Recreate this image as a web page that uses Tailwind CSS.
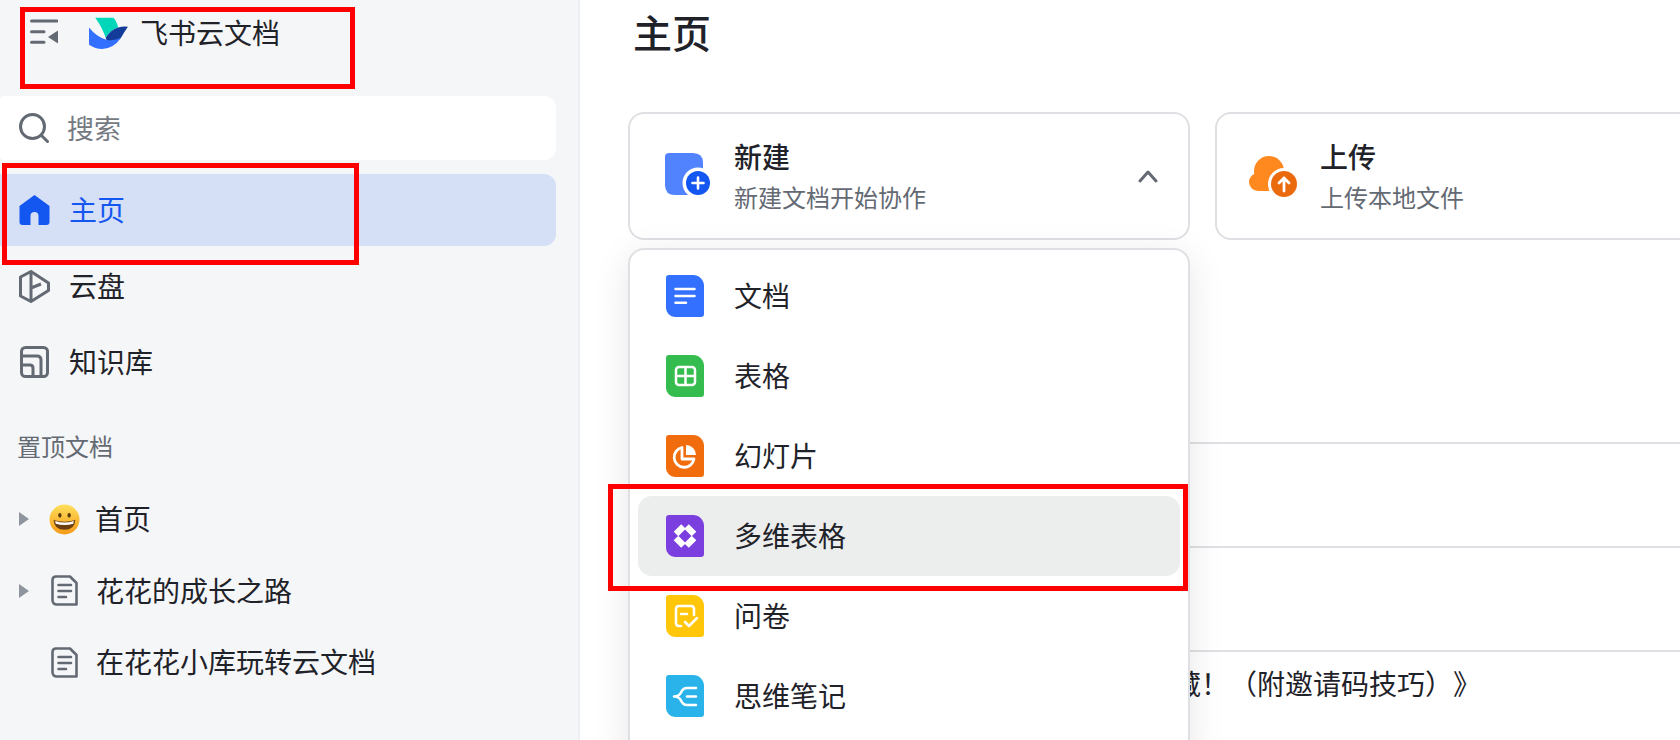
<!DOCTYPE html>
<html lang="zh-CN">
<head>
<meta charset="utf-8" />
<title>飞书云文档</title>
<script src="https://cdn.jsdelivr.net/npm/@tailwindcss/browser@4"></script>
</head>
<body class="bg-white">
<div class="relative flex w-[1680px] h-[740px] overflow-hidden font-['Noto_Sans_CJK_SC',sans-serif] text-[#1f2329] [text-spacing-trim:space-all]">

  <!-- sidebar -->
  <aside class="w-[580px] shrink-0 h-full bg-[#f5f6f8] border-r-2 border-[#eceef1]">
    <div class="h-[96px] flex items-start pt-[16px] pl-[30px]">
      <svg class="w-[28px] h-[26px] mt-[3px]" viewBox="0 0 28 26" fill="none" stroke="#646a73" stroke-width="3" stroke-linecap="round">
        <path d="M1.5 2H27M1.5 12.7H14M1.5 23.3H14" />
        <path d="M18 18L28 11.5V24.5Z" fill="#646a73" stroke="none" />
      </svg>
      <svg class="w-[40px] h-[33px] ml-[31px] mt-[1px]" viewBox="210 20 115 95">
        <path d="M228 22H280Q288 28 294 50Q272 56 258 80Q248 50 228 22Z" fill="#00d6b9" />
        <path d="M258 80Q272 56 294 50Q308 46 322 48Q312 62 302 80Q290 96 262 92Z" fill="#133c9a" />
        <path d="M210 50Q232 78 262 86Q282 90 302 80Q280 112 248 112Q228 112 210 100Z" fill="#3370ff" />
      </svg>
      <span class="ml-[11px] text-[28px] leading-[32px]">飞书云文档</span>
    </div>

    <div class="w-[556px] h-[64px] bg-white rounded-r-[12px] rounded-l-[4px] flex items-center pl-[19px]">
      <svg class="w-[30px] h-[30px]" viewBox="0 0 30 30" fill="none" stroke="#646a73" stroke-width="3" stroke-linecap="round">
        <circle cx="13.5" cy="13.5" r="12" /><path d="M23 23L28.5 28.5" />
      </svg>
      <span class="ml-[18px] text-[27px] text-[#757a82]">搜索</span>
    </div>

    <nav class="mt-[14px] w-[556px] flex flex-col gap-[4px] text-[28px]">
      <a class="h-[72px] flex items-center pl-[19px] bg-[#d5dff6] rounded-r-[12px] text-[#1456f0]">
        <svg class="w-[31px] h-[30px]" viewBox="0 0 30 30" fill="#1456f0">
          <path d="M15 0L30 11V27Q30 30 27 30H19V21a4 4 0 0 0-8 0V30H3Q0 30 0 27V11Z" />
        </svg>
        <span class="ml-[19px] -mt-[2px]">主页</span>
      </a>
      <a class="h-[72px] flex items-center pl-[19px]">
        <svg class="w-[31px] h-[33px]" viewBox="0 0 31 33" fill="none" stroke="#646a73" stroke-width="3" stroke-linejoin="round">
          <path d="M12 1.5L29.5 13V20.5L12 31.5L1.5 26V7Z" /><path d="M12 1.5V31.5M12 18L22 14" />
        </svg>
        <span class="ml-[19px] -mt-[2px]">云盘</span>
      </a>
      <a class="h-[72px] flex items-center pl-[20px]">
        <svg class="w-[29px] h-[32px]" viewBox="0 0 29 32" fill="none" stroke="#646a73" stroke-width="3" stroke-linejoin="round">
          <rect x="1.5" y="1.5" width="26" height="29" rx="4" /><path d="M1.5 10H17Q21 10 21 14V30.5M1.5 19H10Q13 19 13 22V30.5" />
        </svg>
        <span class="ml-[20px] -mt-[2px]">知识库</span>
      </a>
    </nav>

    <div class="mt-[30px] pl-[17px] h-[36px] flex items-center text-[24px] text-[#646a73]">置顶文档</div>

    <ul class="mt-[19px] text-[28px]">
      <li class="h-[72px] flex items-center pl-[19px]">
        <span class="w-0 h-0 border-y-[7px] border-y-transparent border-l-[10px] border-l-[#8f959e]"></span>
        <svg class="ml-[20px] w-[31px] h-[31px]" viewBox="0 0 30 30">
          <defs><linearGradient id="face" x1="0" y1="0" x2="0" y2="1"><stop offset="0" stop-color="#ffdf5c" /><stop offset="1" stop-color="#f59a16" /></linearGradient></defs>
          <circle cx="15" cy="15" r="14.5" fill="url(#face)" />
          <ellipse cx="10.5" cy="11" rx="1.6" ry="2.2" fill="#5a3a10" /><ellipse cx="19.5" cy="11" rx="1.6" ry="2.2" fill="#5a3a10" />
          <path d="M4.5 15.5Q15 19 25.5 15.5Q25 25 15 25Q5 25 4.5 15.5Z" fill="#6b3f10" />
          <path d="M6 16.5Q15 19.5 24 16.5L23.5 19Q15 21.5 6.5 19Z" fill="#fff" />
        </svg>
        <span class="ml-[15px] -mt-[2px]">首页</span>
      </li>
      <li class="h-[71px] flex items-center pl-[19px]">
        <span class="w-0 h-0 border-y-[7px] border-y-transparent border-l-[10px] border-l-[#8f959e]"></span>
        <svg class="ml-[22px] w-[27px] h-[31px]" viewBox="0 0 27 31" fill="none" stroke="#646a73" stroke-width="2.6" stroke-linejoin="round" stroke-linecap="round">
          <path d="M5 1.5H19L25.5 8V29.5H6Q1.5 29.5 1.5 25V5Q1.5 1.5 5 1.5Z" /><path d="M7.5 10H20M7.5 16H20M7.5 22H15" />
        </svg>
        <span class="ml-[18px] -mt-[2px]">花花的成长之路</span>
      </li>
      <li class="h-[72px] flex items-center pl-[51px]">
        <svg class="w-[27px] h-[31px]" viewBox="0 0 27 31" fill="none" stroke="#646a73" stroke-width="2.6" stroke-linejoin="round" stroke-linecap="round">
          <path d="M5 1.5H19L25.5 8V29.5H6Q1.5 29.5 1.5 25V5Q1.5 1.5 5 1.5Z" /><path d="M7.5 10H20M7.5 16H20M7.5 22H15" />
        </svg>
        <span class="ml-[18px] -mt-[2px]">在花花小库玩转云文档</span>
      </li>
    </ul>
  </aside>

  <!-- main -->
  <main class="relative flex-1 pl-[48px] h-full">
    <h1 class="pl-[5px] h-[62px] flex items-center text-[39px] font-medium">主页</h1>

    <div class="mt-[50px] flex gap-[25px]">
      <div class="w-[562px] shrink-0 h-[128px] border-2 border-[#dee0e3] rounded-[16px] flex items-center pl-[35px] pr-[30px]">
        <svg class="w-[46px] h-[44px] -mt-[2px]" viewBox="0 0 46 44">
          <path d="M4 0H28Q38 0 38 10V42H10Q0 42 0 32V4Q0 0 4 0Z" fill="#5283ff" />
          <circle cx="33" cy="30" r="15.5" fill="#fff" /><circle cx="33" cy="30" r="12" fill="#1456f0" />
          <path d="M33 24.5V35.5M27.5 30H38.5" stroke="#fff" stroke-width="2.6" stroke-linecap="round" />
        </svg>
        <div class="ml-[23px]">
          <div class="text-[28px] leading-[38px] font-medium">新建</div>
          <div class="text-[24px] leading-[38px] text-[#646a73] mt-[3px]">新建文档开始协作</div>
        </div>
        <svg class="ml-auto w-[20px] h-[14px]" viewBox="0 0 20 14" fill="none" stroke="#646a73" stroke-width="3" stroke-linecap="round" stroke-linejoin="round">
          <path d="M2 12L10 3L18 12" />
        </svg>
      </div>
      <div class="w-[562px] shrink-0 h-[128px] border-2 border-[#dee0e3] rounded-[16px] flex items-center pl-[32px]">
        <svg class="w-[49px] h-[41px]" viewBox="0 0 49 41">
          <g fill="#ff881f"><circle cx="20" cy="15" r="15" /><circle cx="9" cy="26" r="9" /><rect x="9" y="17" width="26" height="18" /></g>
          <circle cx="35" cy="28" r="16" fill="#fff" /><circle cx="35" cy="28" r="13" fill="#ea6a0e" />
          <path d="M35 35V22M30 27L35 22L40 27" fill="none" stroke="#fff" stroke-width="2.8" stroke-linecap="round" stroke-linejoin="round" />
        </svg>
        <div class="ml-[22px]">
          <div class="text-[28px] leading-[38px] font-medium">上传</div>
          <div class="text-[24px] leading-[38px] text-[#646a73] mt-[3px]">上传本地文件</div>
        </div>
      </div>
    </div>

    <!-- list behind the menu -->
    <div class="mt-[75px] w-[1052px] text-[28px]">
      <div class="h-[129px] border-b-2 border-[#dee0e3]"></div>
      <div class="h-[104px] border-b-2 border-[#dee0e3]"></div>
      <div class="h-[104px] border-b-2 border-[#dee0e3]"></div>
      <div class="pl-[545px] h-[62px] flex items-center whitespace-nowrap">藏！（附邀请码技巧）》</div>
    </div>

    <!-- new document menu -->
    <div class="absolute left-[48px] top-[248px] w-[562px] h-[520px] bg-white border-2 border-[#dee0e3] rounded-[16px] pt-[6px] px-[8px] shadow-[0_8px_36px_rgba(0,0,0,0.10)]">
      <div class="h-[80px] flex items-center pl-[28px] text-[28px]">
        <div class="w-[38px] h-[42px] bg-[#3370ff] rounded-tl-[3px] rounded-tr-[11px] rounded-bl-[9px] rounded-br-[3px]">
          <svg class="w-[38px] h-[42px]" viewBox="0 0 38 42" fill="none" stroke="#fff" stroke-width="2.5" stroke-linecap="round"><path d="M9.5 14H28.5M9.5 21H28.5M9.5 27.7H20" /></svg>
        </div>
        <span class="ml-[30px] -mt-[2px]">文档</span>
      </div>
      <div class="h-[80px] flex items-center pl-[28px] text-[28px]">
        <div class="w-[38px] h-[42px] bg-[#34bd4e] rounded-tl-[3px] rounded-tr-[11px] rounded-bl-[9px] rounded-br-[3px]">
          <svg class="w-[38px] h-[42px]" viewBox="0 0 38 42" fill="none" stroke="#fff" stroke-width="2.5"><rect x="10" y="12" width="19" height="18" rx="3" /><path d="M19.5 12V30M10 21H29" /></svg>
        </div>
        <span class="ml-[30px] -mt-[2px]">表格</span>
      </div>
      <div class="h-[80px] flex items-center pl-[28px] text-[28px]">
        <div class="w-[38px] h-[42px] bg-[#f06c0c] rounded-tl-[3px] rounded-tr-[11px] rounded-bl-[9px] rounded-br-[3px]">
          <svg class="w-[38px] h-[42px]" viewBox="0 0 38 42" fill="none" stroke="#fff" stroke-width="2.8"><path d="M16 12.5A10 10 0 1 0 28 24H16Z" stroke-linejoin="round" /><path d="M20 10A10 10 0 0 1 30 20H20Z" fill="#fff" stroke="none" /></svg>
        </div>
        <span class="ml-[30px] -mt-[2px]">幻灯片</span>
      </div>
      <div class="h-[80px] flex items-center pl-[28px] text-[28px] bg-[#eceeed] rounded-[14px]">
        <div class="w-[38px] h-[42px] bg-[#7b3fe0] rounded-tl-[3px] rounded-tr-[11px] rounded-bl-[9px] rounded-br-[3px]">
          <svg class="w-[38px] h-[42px]" viewBox="0 0 38 42" fill="none" stroke="#fff" stroke-width="6.5"><path d="M10 19L17.5 11.5M20.5 11.5L28 19M28 23L20.5 30.5M17.5 30.5L10 23" /></svg>
        </div>
        <span class="ml-[30px] -mt-[2px]">多维表格</span>
      </div>
      <div class="h-[80px] flex items-center pl-[28px] text-[28px]">
        <div class="w-[38px] h-[42px] bg-[#ffc60a] rounded-tl-[3px] rounded-tr-[11px] rounded-bl-[9px] rounded-br-[3px]">
          <svg class="w-[38px] h-[42px]" viewBox="0 0 38 42" fill="none" stroke="#fff" stroke-width="2.5" stroke-linecap="round" stroke-linejoin="round"><path d="M28 20V14Q28 11 25 11H13Q10 11 10 14V28Q10 31 13 31H15M15 19H21M19 27L23 31L31 23" /></svg>
        </div>
        <span class="ml-[30px] -mt-[2px]">问卷</span>
      </div>
      <div class="h-[80px] flex items-center pl-[28px] text-[28px]">
        <div class="w-[38px] h-[42px] bg-[#29b3ea] rounded-tl-[3px] rounded-tr-[11px] rounded-bl-[9px] rounded-br-[3px]">
          <svg class="w-[38px] h-[42px]" viewBox="0 0 38 42" fill="none" stroke="#fff" stroke-width="2.6" stroke-linecap="round" stroke-linejoin="round"><path d="M30 13H21Q17 13 15 17.5Q13 21.5 8 21.5Q13 21.5 15 25.5Q17 30 21 30H30M21 21.5H30" /></svg>
        </div>
        <span class="ml-[30px] -mt-[2px]">思维笔记</span>
      </div>
    </div>
  </main>

  <!-- red annotation boxes -->
  <div class="absolute left-[20px] top-[7px] w-[335px] h-[82px] border-[5px] border-[#ff0000]"></div>
  <div class="absolute left-[2px] top-[163px] w-[357px] h-[102px] border-[5px] border-[#ff0000]"></div>
  <div class="absolute left-[608px] top-[484px] w-[580px] h-[107px] border-[5px] border-[#ff0000]"></div>
</div>
</body>
</html>
